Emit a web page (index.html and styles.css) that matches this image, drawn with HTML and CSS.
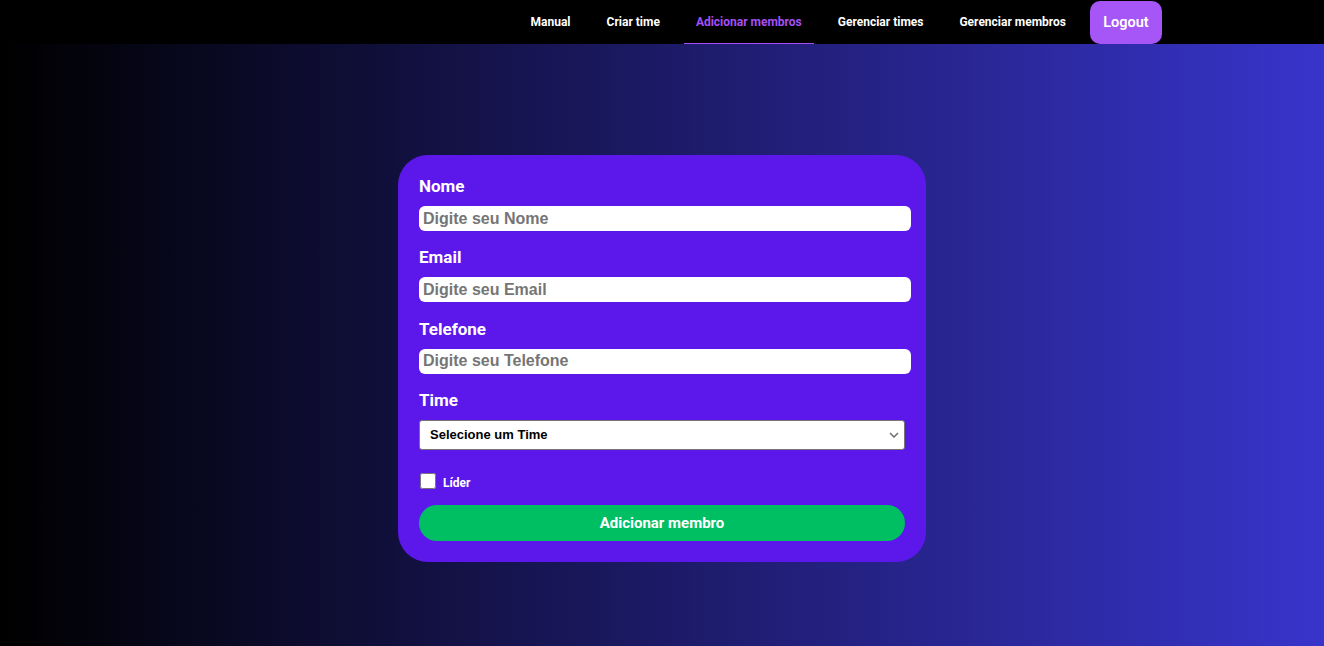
FILE: index.html
```html
<!DOCTYPE html>
<html lang="pt-BR">
<head>
<meta charset="utf-8">
<title>Adicionar membros</title>
<link rel="stylesheet" href="styles.css">
</head>
<body>
<nav class="navbar">
  <a class="nav-link" href="#">Manual</a>
  <a class="nav-link" href="#">Criar time</a>
  <a class="nav-link active" href="#">Adicionar membros</a>
  <a class="nav-link" href="#">Gerenciar times</a>
  <a class="nav-link" href="#">Gerenciar membros</a>
  <button class="logout" type="button">Logout</button>
</nav>
<main class="main">
  <form class="card">
    <label class="field-label" for="nome">Nome</label>
    <input class="field-input" id="nome" type="text" placeholder="Digite seu Nome">
    <label class="field-label" for="email">Email</label>
    <input class="field-input" id="email" type="email" placeholder="Digite seu Email">
    <label class="field-label" for="tel">Telefone</label>
    <input class="field-input" id="tel" type="text" placeholder="Digite seu Telefone">
    <label class="field-label" for="time">Time</label>
    <div class="select-wrap">
      <select class="field-select" id="time">
        <option>Selecione um Time</option>
      </select>
      <svg class="chevron" width="10" height="6" viewBox="0 0 10 6" aria-hidden="true"><path d="M1 1 L5 5 L9 1" fill="none" stroke="#6e6e6e" stroke-width="1.5"/></svg>
    </div>
    <div class="check-row">
      <input class="check" id="lider" type="checkbox">
      <label class="check-label" for="lider">Líder</label>
    </div>
    <button class="submit" type="button">Adicionar membro</button>
  </form>
</main>
</body>
</html>
```

FILE: styles.css
```css
html, body {
  margin: 0;
  padding: 0;
}
body {
  font-family: Roboto, "Liberation Sans", Arial, sans-serif;
  background: #000;
  min-height: 100vh;
}
.navbar {
  height: 44px;
  background: #000;
  display: flex;
  justify-content: flex-end;
  align-items: stretch;
  gap: 12px;
  padding-right: 162px;
  box-sizing: border-box;
  position: relative;
  z-index: 2;
}
.nav-link {
  display: flex;
  align-items: center;
  padding: 0 12px;
  color: #fff;
  text-decoration: none;
  font-weight: 700;
  font-size: 12px;
}
.nav-link.active {
  color: #a550f5;
  box-shadow: inset 0 -1px 0 #a550f5;
}
.logout {
  margin-top: 1px;
  height: 43px;
  width: 72px;
  padding: 0;
  border: none;
  border-radius: 10px;
  background: #a655f6;
  color: #fff;
  font-family: Roboto, sans-serif;
  font-weight: 600;
  font-size: 14.5px;
  cursor: pointer;
}
.main {
  height: 602px;
  background: linear-gradient(to right, #000 0%, #3834cb 100%);
  display: flex;
  justify-content: center;
  align-items: flex-start;
  padding-top: 111px;
  box-sizing: border-box;
}
.card {
  width: 528px;
  box-sizing: border-box;
  padding: 21px 21px 21px;
  background: #5c18eb;
  border-radius: 30px;
  display: flex;
  flex-direction: column;
  align-items: flex-start;
}
.field-label {
  color: #fff;
  font-weight: 700;
  font-size: 17px;
  line-height: 20px;
  margin-bottom: 10px;
}
.field-input {
  width: 484px;
  height: 25px;
  box-sizing: content-box;
  padding: 0 4px;
  border: none;
  border-radius: 6px;
  background: #fff;
  font-family: "Liberation Sans", Arial, sans-serif;
  font-weight: 700;
  font-size: 16px;
  color: #222;
  margin: 0 0 16.33px;
  outline: none;
}
.field-input::placeholder {
  color: #757575;
}
.select-wrap {
  position: relative;
  width: 486px;
  height: 30px;
}
.field-select {
  appearance: none;
  -webkit-appearance: none;
  width: 486px;
  height: 30px;
  box-sizing: border-box;
  border: 1px solid #767676;
  border-radius: 3px;
  background: #fff;
  font-family: "Liberation Sans", Arial, sans-serif;
  font-weight: 700;
  font-size: 13px;
  color: #000;
  padding: 0 24px 0 10px;
  margin: 0;
}
.chevron {
  position: absolute;
  right: 6px;
  top: 12px;
  pointer-events: none;
}
.check-row {
  display: flex;
  align-items: center;
  margin-top: 23px;
  height: 17px;
}
.check {
  width: 16px;
  height: 16px;
  margin: 0 7px 0 1px;
}
.check-label {
  color: #fff;
  font-weight: 700;
  font-size: 12px;
  padding-top: 4px;
}
.submit {
  margin-top: 15px;
  width: 486px;
  height: 36px;
  border: none;
  border-radius: 18px;
  background: #00bf63;
  color: #fff;
  font-family: Roboto, sans-serif;
  font-weight: 700;
  font-size: 15px;
  cursor: pointer;
}
```
